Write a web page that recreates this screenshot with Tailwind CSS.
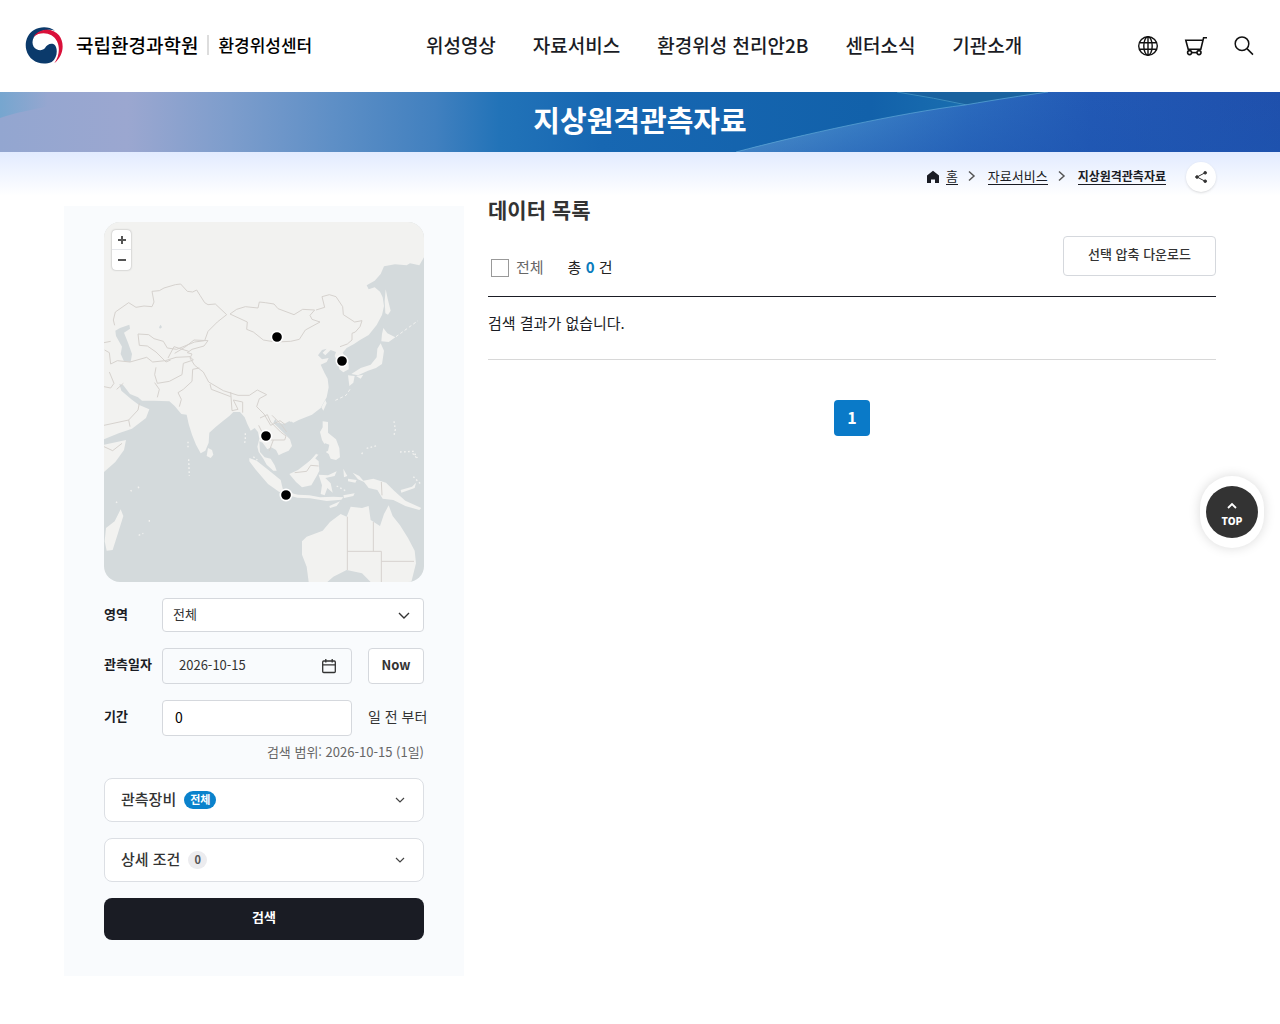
<!DOCTYPE html>
<html lang="ko">
<head>
  <meta charset="UTF-8">
  <meta name="viewport" content="width=device-width, initial-scale=1.0">
  <script src="https://cdn.jsdelivr.net/npm/@tailwindcss/browser@4"></script>
  <title>지상원격관측자료 | 환경위성센터</title>
</head>
<body class="min-h-screen bg-white font-['Noto_Sans_CJK_KR',sans-serif] text-[#1a1c24]">
  <header class="flex h-[92px] items-center justify-between px-6">
    <a href="#" class="flex items-center gap-3 text-black">
      <svg class="size-10" viewBox="-5 -4 120 120">
        <path fill="#0b3a6b" d="M88 10C70-3 45-4 25 8 5 20-4 45 2 68c8 32 43 50 76 36 17-12 19-38 10-50-10-10-24-2-30 8-8 10-26 8-34-4-8-14-2-32 14-42C52 8 72 4 88 10z"/>
        <path fill="#d9103a" d="M24 28C40 2 82 0 100 24c18 24 14 60-14 84 14-20 18-46 8-66C82 16 46 10 24 28z"/>
      </svg>
      <span class="flex items-center gap-2 pb-0.5 whitespace-nowrap">
        <strong class="text-[19px] leading-6 font-medium">국립환경과학원</strong>
        <span class="mx-px h-5 w-0.5 bg-[#dddddd]"></span>
        <span class="text-[17px] leading-6 font-medium">환경위성센터</span>
      </span>
    </a>
    <nav class="flex gap-[37px] pb-0.5 whitespace-nowrap text-[19px] leading-7 font-medium">
      <a href="#">위성영상</a>
      <a href="#">자료서비스</a>
      <a href="#">환경위성 천리안2B</a>
      <a href="#">센터소식</a>
      <a href="#">기관소개</a>
    </nav>
    <div class="flex gap-6">
      <button type="button" aria-label="언어" class="size-6">
        <svg viewBox="0 0 24 24" fill="none" stroke="#111" stroke-width="1.4"><circle cx="12" cy="12" r="9.3"/><ellipse cx="12" cy="12" rx="4.2" ry="9.3"/><path d="M12 2.7v18.6M3.6 8.8h16.8M3.6 15.2h16.8"/></svg>
      </button>
      <button type="button" aria-label="장바구니" class="size-6">
        <svg viewBox="0 0 24 24" fill="none" stroke="#111" stroke-width="1.6"><path d="M23 3.8h-3.4l-2.800 11.400H4.200L1.800 6.200h17"/><circle cx="5.6" cy="18.600" r="2"/><circle cx="15" cy="18.600" r="2"/><path d="M7.600 18.600H13"/></svg>
      </button>
      <button type="button" aria-label="검색 열기" class="size-6">
        <svg viewBox="0 0 24 24" fill="none" stroke="#111" stroke-width="1.5"><circle cx="10" cy="9.7" r="6.8"/><path d="m15 14.6 6 6"/></svg>
      </button>
    </div>
  </header>

  <!-- 비주얼 배너 -->
  <div class="relative h-[60px]">
    <svg class="absolute inset-0 size-full" viewBox="0 0 1280 60" preserveAspectRatio="none">
      <defs>
        <linearGradient id="sky">
          <stop offset="0" stop-color="#93a6d0"/><stop offset=".1" stop-color="#9ba7d0"/><stop offset=".18" stop-color="#7d9dcc"/>
          <stop offset=".26" stop-color="#5e8fc6"/><stop offset=".34" stop-color="#4180bf"/><stop offset=".39" stop-color="#2273b8"/>
          <stop offset=".47" stop-color="#1767b2"/><stop offset=".68" stop-color="#1261aa"/><stop offset=".76" stop-color="#1a6fb0"/><stop offset="1" stop-color="#1a66a8"/>
        </linearGradient>
        <linearGradient id="arc" x1="740" y1="0" x2="1280" y2="0" gradientUnits="userSpaceOnUse">
          <stop offset="0" stop-color="#5ba3d2"/><stop offset=".2" stop-color="#4189c9"/><stop offset=".42" stop-color="#2c6cbe"/><stop offset=".65" stop-color="#2259b5"/><stop offset="1" stop-color="#1f50ac"/>
        </linearGradient>
        <linearGradient id="shade" x1="0" y1="0" x2="0" y2="1">
          <stop offset="0" stop-color="#1d55b0" stop-opacity="0"/><stop offset="1" stop-color="#1d55b0" stop-opacity=".45"/>
        </linearGradient>
        <linearGradient id="tint" x1="0" y1="0" x2=".3" y2="0">
          <stop offset="0" stop-color="#6fa6cf" stop-opacity=".8"/><stop offset="1" stop-color="#6fa6cf" stop-opacity="0"/>
        </linearGradient>
      </defs>
      <path fill="url(#sky)" d="M0 0h1280v60H0z"/>
      <path fill="url(#tint)" d="M0 0h160Q40 12 0 26z"/>
      <path fill="#1a629f" d="M895 0q40 7 70 13Q1000 6 1050 0z"/>
      <path fill="none" stroke="#3b8cc0" stroke-width="1" d="M897 0q38 6 70 13"/>
      <path fill="url(#arc)" d="M736 60C800 43 900 21 965 13 1000 7 1020 4 1048 0h232v60z"/>
      <path fill="url(#shade)" d="M736 60C800 43 900 21 965 13 1000 7 1020 4 1048 0h232v60z"/>
      <path fill="none" stroke="#5ea6d6" stroke-opacity=".7" d="M736 60C800 43 900 21 965 13 1000 7 1020 4 1048 0"/>
    </svg>
    <h1 class="relative pt-1.5 text-center text-[29px] leading-[42px] font-bold text-white">지상원격관측자료</h1>
  </div>

  <div class="bg-linear-to-b from-[#e2ebff] to-transparent to-[44px] px-16">
    <div class="flex h-[42px] items-center justify-end gap-5 pt-2">
      <ol class="flex items-center gap-2 pb-0.5 text-[13px] leading-4 whitespace-nowrap">
        <li class="flex items-center gap-1.5">
          <svg class="mt-0.5 size-3.5" viewBox="0 0 14 14" fill="#1a1c24"><path d="M7 .8 1 5.600V13h4V9.500h4V13h4V5.600z"/></svg>
          <a href="#" class="border-b border-[#1a1c24]">홈</a>
        </li>
        <li class="flex items-center gap-2.5">
          <svg class="size-3" viewBox="0 0 12 12" fill="none" stroke="#555" stroke-width="1.5"><path d="m3 1.5 5 4.5-5 4.5"/></svg>
          <a href="#" class="border-b border-[#1a1c24]">자료서비스</a>
        </li>
        <li class="flex items-center gap-2.5">
          <svg class="size-3" viewBox="0 0 12 12" fill="none" stroke="#555" stroke-width="1.5"><path d="m3 1.5 5 4.5-5 4.5"/></svg>
          <a href="#" class="border-b border-[#1a1c24] text-[12px] font-bold">지상원격관측자료</a>
        </li>
      </ol>
      <button type="button" aria-label="공유" class="flex size-[30px] items-center justify-center rounded-full bg-white shadow-sm">
        <svg class="size-4" viewBox="0 0 16 16" fill="#333" stroke="#333"><path fill="none" d="M12 3.8 4 8l8 4.2"/><circle cx="12.2" cy="3.8" r="1.3"/><circle cx="4" cy="8" r="1.3"/><circle cx="12.2" cy="12.2" r="1.3"/></svg>
      </button>
    </div>

    <div class="flex items-start gap-6">
      <!-- 검색 조건 -->
      <form class="mt-3 w-[400px] shrink-0 bg-[#f9fbfd] px-10 pt-4 pb-9" onsubmit="return false">
        <div class="relative h-[360px] overflow-hidden rounded-2xl bg-[#d4dadc]">
          <svg class="size-full" viewBox="132 66 960 1080" fill="#f2f2f0" preserveAspectRatio="xMidYMid slice">
            <!-- 아시아 본토 -->
            <path d="M132 66H1092V172L1078 196 1050 190 1040 196 1005 193 972 199 962 222 944 242 920 256 926 268 944 262 960 275 968 292 972 318 966 345 950 375 926 405 900 420 882 432 860 444 848 458 856 470 866 492 866 508 850 517 838 508 834 488 824 468 828 456 812 450 796 466 788 458 800 446 786 450 774 466 786 478 806 474 800 486 782 494 794 520 803 536 806 562 800 592 782 624 756 644 716 660 700 668 690 662 672 672 652 668 646 656 640 668 656 684 672 700 690 718 696 738 686 752 668 760 656 766 648 750 634 742 622 748 608 728 598 724 600 756 614 772 632 776 644 796 650 812 640 812 620 794 610 776 596 756 592 740 598 716 594 696 584 684 572 692 562 672 554 652 540 636 520 636 508 648 488 664 466 682 448 698 446 728 436 752 422 760 408 734 396 704 386 672 380 644 364 642 344 618 328 604 282 602 246 602 234 592 210 582 190 556 178 552 184 572 214 598 236 614 268 628 258 654 216 686 176 700 132 718z"/>
            <path d="M132 734 160 728 198 720 192 750 166 786 132 816z"/>
            <path fill="#d4dadc" d="M180 384 208 374 210 386 192 398 204 428 216 462 212 486 192 484 182 462 186 440 168 408 166 392z"/>
            <path fill="#d4dadc" d="m297 382 5-8 4 8-6 4z"/>
            <!-- 일본, 사할린 -->
            <path d="m977 268 6 28 9 36-8 12-8-4-2-36z"/>
            <path d="m970 384 12 16 24 12-20 14-22-2 2-22z"/>
            <path d="m962 430 10 22-6 40-18 12-24 8-30 14-20-4 28-18 30-10 18-22 2-26zM864 526l20 2-4 20-12 10zM888 528l22-4-8 12z"/>
            <path fill="none" stroke="#f2f2f0" stroke-width="3" stroke-dasharray="9 7" d="m1008 410 66-48M870 568l-12 18-34 16"/>
            <!-- 대만, 하이난, 스리랑카, 마다가스카르 -->
            <path d="m796 600 4 10-10 22-6-10zM684 654l18-4 2 8-14 8zM444 744l12 6 4 14-8 10-12-6zM182 928l8 20-18 58-14 44-18 2-6-28 4-40 26-20z"/>
            <!-- 필리핀 -->
            <path d="m788 664 16 2 0 32 24 20 10 26 2 28-12 8-16-4-6-14-12-8 4-14-12-20-6-24 8-14zM744 790l36-42 4 6-36 42z"/>
            <!-- 인도네시아 -->
            <path d="m568 774 22 8 38 30 34 28 8 34-12 2-34-24-36-42-20-26zM688 822l26-12 28-22 20-16 14 12 2 28-8 16-16 28-28 6-18-16z"/>
            <path d="m680 876 34 8 34 2 32 6 40-2 30 2-6 7-44 4-50-8-38-2-30-8zM776 824l28 2 26-12-6 14-28 6 16 16 6 28-16-14-8 22-12-4 4-26zM808 918l32-14-10 14-20 6zM850 806l12 22-10 4zM864 836l26 4-4 8-22-4zM850 886l34-6-4 8-28 6z"/>
            <path d="m878 818 20 10 12 14 30-6 38 12 26 26 32 28 48 22-6 6-42-12-36-18-32-4-16-26-26-6-14-18-18-8zM1022 870l34-10 12-12-4 16-40 14z"/>
            <!-- 호주 -->
            <path d="m726 1024 14-14 48-18 22-26 32-24 18 8 12-30 34 4 20-6 6 42 28 18 12-36 14-26 12 32 22 28 24 38 20 38 4 38-14 56H932l-26-26-46-10-40 20-18 16h-56l-6-46-14-36z"/>
            <path d="M580 770l12 10M556 700v22l-4 12M592 806l16 22M384 725v20M386 778l2 50M1002 664l4 24-4 18M920 745l30-8M908 758l-4 5M1020 756l40-2 12 20M212 870l4 6M234 860l4 6M236 1006l14-6M268 960v6M168 905l4 4M1058 760l14 16M830 858l30 16M1060 830l24 24" fill="none" stroke="#f2f2f0" stroke-width="4" stroke-dasharray="5 7"/>
            <!-- 국경선 -->
            <g fill="none" stroke="#d6d2ce" stroke-width="3" stroke-linejoin="round">
              <path d="M164 376l-4-16 6-24 20-14 20-14 22 14 24-4 24 2 6-14-6-32 22-2 14-8 34-10 16-2 20 22 16 2 12-6 10 16 14 22 10 6 22-2 34 32-28 22-28 28-10 28-30 4-54 22-28-4-12-20-28-8-16-12-32-2 4 34 24 2 26 18 30 30 14-6"/>
              <path d="m510 342 20-14 26-8 38 4 4-18 18 2 26 4 12 14 48 18 26-16 36 2-14 16 6 12 24 8-44 24-18 28-26 6-46 2-36-6-30-24-20-8 2-22z"/>
              <path d="m768 330 26-8-8-32 22-6 20 6 20 30 2 24 34 22 22-4-6 18-14 16-10 4v20l-14 12-22 8"/>
              <path d="m344 460 30-18 28-22 42 2-12 16-36 10-14 10 14 4-6 12 14 22 26 20 16 30 44 26 44 14h34l24-16 28 14-22 12-8 24 22 22 20 34 28-14 16 12"/>
              <path d="m418 504-20 4-2 36-26 24-16 10 10 20-6 22M450 552l4 16 58 22M512 576l4 56 18-4-14-28 28 6v32M600 654l22-10 10 22 30 30 16 12-4 12h-42l-10-6-16-18-10-20M640 720l-12 32M636 646l28 28 16 22"/>
              <path d="m134 450 14 8 4 34 20-10 38 4 50-14 18 14 38-4 32-10 42-2 10 10-30 10-4 34-38 20-36 6-8-26 4-22M284 548l14 20-6 24M132 560l20 4 10-14-14-34M190 550l-20 18M132 676l74-16 28-30 4-20M206 660l4 20M132 428l20-4M132 740l26 12 28-22"/>
              <path d="M324 474l18-34 44 14M704 818l36-4 12-18 24 2M964 846l2 40M862 950v160M862 1054h102M940 966v88M964 1054v92M964 1084h98"/>
            </g>
            <path fill="#d4dadc" d="m776 742 20-12 12 4-4 18-24 14-12-4z"/>
            <g fill="#000" stroke="#fff" stroke-width="5">
              <circle cx="651" cy="411" r="17"/>
              <circle cx="846" cy="483" r="17"/>
              <circle cx="618" cy="708" r="17"/>
              <circle cx="678" cy="885" r="17"/>
            </g>
          </svg>
          <div class="absolute top-2 left-2 flex flex-col divide-y divide-gray-200 rounded-sm bg-white shadow-[0_0_2px_rgba(0,0,0,0.35)]">
            <button type="button" aria-label="확대" class="flex h-5 w-[19px] items-center justify-center">
              <svg class="size-2" viewBox="0 0 8 8" stroke="#555" stroke-width="2"><path d="M4 0v8M0 4h8"/></svg>
            </button>
            <button type="button" aria-label="축소" class="flex h-5 w-[19px] items-center justify-center">
              <svg class="size-2" viewBox="0 0 8 8" stroke="#555" stroke-width="2"><path d="M0 4h8"/></svg>
            </button>
          </div>
        </div>

        <div class="mt-4 grid grid-cols-[58px_190px_56px] gap-y-4 text-[13px]">
          <label for="area" class="self-center pb-0.5 font-bold whitespace-nowrap">영역</label>
          <div class="relative col-span-2 w-[262px]">
            <select id="area" class="h-[34px] w-full appearance-none rounded-sm border border-[#d5d8dd] bg-white px-2.5 pb-0.5 text-[#333]">
              <option>전체</option>
            </select>
            <svg class="pointer-events-none absolute top-3 right-3.5 size-3" viewBox="0 0 12 12" fill="none" stroke="#333" stroke-width="1.4"><path d="m1 3 5 5 5-5"/></svg>
          </div>

          <label for="date" class="self-center pb-1 font-bold whitespace-nowrap">관측일자</label>
          <div class="flex h-9 items-center rounded-sm border border-[#d5d8dd] pr-3.5 pl-4">
            <input id="date" type="text" value="2026-10-15" class="min-w-0 flex-1 bg-transparent pb-0.5 text-[#333] outline-none">
            <button type="button" aria-label="달력">
              <svg class="size-4" viewBox="0 0 16 16" fill="none" stroke="#333" stroke-width="1.3"><rect x="1.7" y="3" width="12.6" height="11.5" rx="1"/><path d="M1.7 6.8h12.6M4.8 1v3.5M11.2 1v3.5"/></svg>
            </button>
          </div>
          <button type="button" class="ml-4 h-9 w-14 rounded-sm border border-[#d5d8dd] bg-white pb-0.5 font-bold text-[#333]">Now</button>

          <label for="days" class="self-center pb-1 font-bold whitespace-nowrap">기간</label>
          <input id="days" type="text" value="0" class="h-9 min-w-0 rounded-sm border border-[#d5d8dd] bg-white px-3 pb-0.5 text-sm text-black outline-none">
          <span class="ml-4 self-center pb-1 text-sm whitespace-nowrap text-[#333]">일 전 부터</span>
        </div>
        <p class="mt-1.5 text-right text-[13px] leading-5 text-[#666]">검색 범위: 2026-10-15 (1일)</p>

        <button type="button" class="mt-4 flex h-11 w-full items-center gap-2 rounded-lg border border-[#dcdfe4] bg-white px-4 text-[15px] font-medium text-[#333]">
          <span class="pb-0.5">관측장비</span>
          <span class="rounded-full bg-[#0a82cc] px-1.5 pb-0.5 text-[11px] leading-4 font-bold text-white">전체</span>
          <svg class="mr-0.5 ml-auto size-2.5" viewBox="0 0 10 10" fill="none" stroke="#444" stroke-width="1.2"><path d="m1 3 4 4 4-4"/></svg>
        </button>
        <button type="button" class="mt-4 flex h-11 w-full items-center gap-2 rounded-lg border border-[#dcdfe4] bg-white px-4 text-[15px] font-medium text-[#333]">
          <span class="pb-0.5">상세 조건</span>
          <span class="rounded-full bg-[#ececef] px-1.5 pb-0.5 text-[11px] leading-4 font-bold text-[#555]">0</span>
          <svg class="mr-0.5 ml-auto size-2.5" viewBox="0 0 10 10" fill="none" stroke="#444" stroke-width="1.2"><path d="m1 3 4 4 4-4"/></svg>
        </button>
        <button type="submit" class="mt-4 h-[42px] w-full rounded-lg bg-[#1a1c24] pb-1 text-[13px] font-bold text-white">검색</button>
      </form>

      <!-- 데이터 목록 -->
      <main class="min-w-0 flex-1">
        <h2 class="text-[21px] leading-[30px] font-bold text-[#333]">데이터 목록</h2>
        <div class="mt-3 flex h-[61px] items-center justify-between border-b border-[#1a1c24]">
          <div class="flex items-center pt-1 text-[15px] leading-6">
            <input id="all" type="checkbox" class="ml-[3px] size-[18px] appearance-none border border-[#999] bg-white">
            <label for="all" class="ml-[7px] pb-0.5 text-[#666]">전체</label>
            <p class="ml-6 pb-0.5 text-[#222]">총 <strong class="text-[#0a7cbc]">0</strong> 건</p>
          </div>
          <button type="button" class="mb-5 h-10 rounded-sm border border-[#d5d8dd] px-6 pb-1 text-[13px] font-medium text-[#333]">선택 압축 다운로드</button>
        </div>
        <p class="border-b border-[#d8d8d8] pt-3.5 pb-6 text-[15px] leading-6">검색 결과가 없습니다.</p>
        <div class="mt-10 flex justify-center">
          <button type="button" class="size-9 rounded-sm bg-[#0a7ac8] pb-0.5 text-base font-bold text-white">1</button>
        </div>
      </main>
    </div>
  </div>

  <a href="#" class="fixed top-[476px] right-4 rounded-full bg-white px-1.5 py-2.5 shadow-[0_0_12px_rgba(0,0,0,0.15)]">
    <span class="flex size-13 flex-col items-center justify-center rounded-full bg-[#333] pt-1 text-[10px] leading-3 font-black text-white">
      <svg class="mb-1 size-2.5" viewBox="0 0 10 10" fill="none" stroke="#fff" stroke-width="1.8"><path d="m1 7 4-4 4 4"/></svg>
      TOP
    </span>
  </a>
</body>
</html>
